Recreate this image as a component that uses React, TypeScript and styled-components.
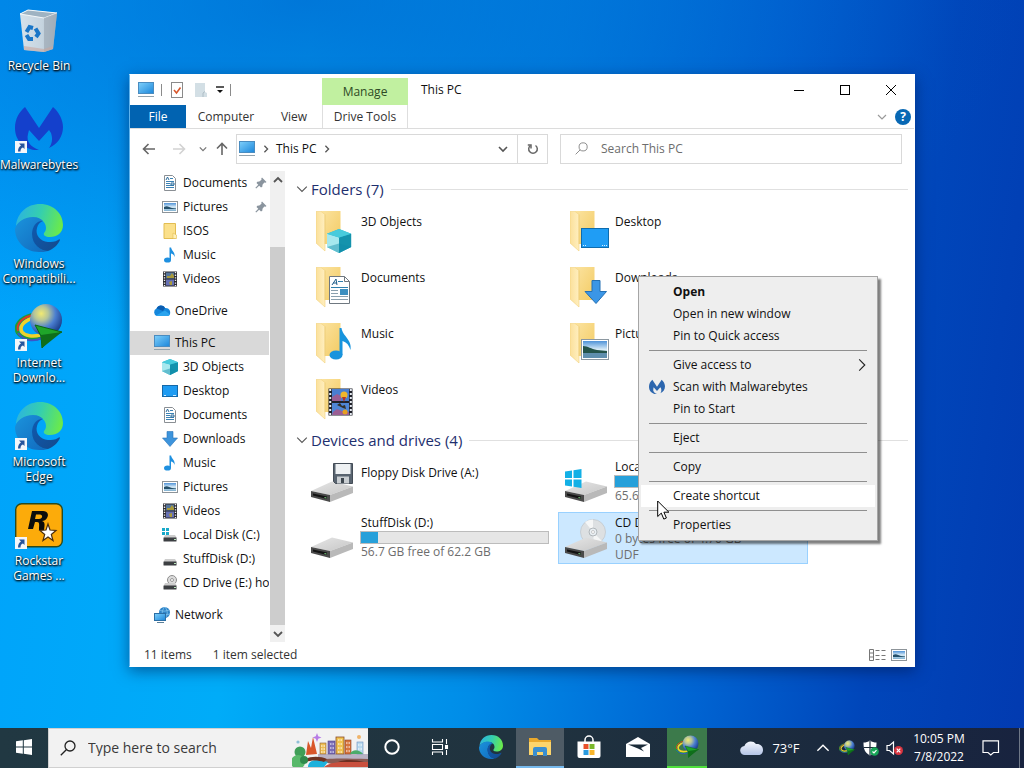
import React from "react";
import styled, { createGlobalStyle, css } from "styled-components";

const FONT = `"Open Sans", "Noto Sans", "Liberation Sans", sans-serif`;

const GlobalStyle = createGlobalStyle`
  *, *::before, *::after { box-sizing: border-box; }
  body { margin: 0; font-family: ${FONT}; font-size: 12px; line-height: 16px; color: #111; }
  button, input { font: inherit; color: inherit; }
  a { color: inherit; text-decoration: none; }
  ul { list-style: none; margin: 0; padding: 0; }
  h2, p { margin: 0; font-weight: 400; }
  svg { display: block; flex: none; }
`;

/* ---------- Shared paint ---------- */

const HiddenDefs = styled.svg`
  position: absolute;
  width: 0;
  height: 0;
`;

const Paints = () => (
  <HiddenDefs aria-hidden="true">
    <defs>
      <linearGradient id="screen" x1="0" y1="0" x2="1" y2="1">
        <stop offset="0" stopColor="#7fd0fb" /><stop offset="1" stopColor="#1b86da" />
      </linearGradient>
      <linearGradient id="folderBack" x1="0" y1="0" x2="1" y2="1">
        <stop offset="0" stopColor="#fbe3a0" /><stop offset="1" stopColor="#f3cb63" />
      </linearGradient>
      <linearGradient id="folderFront" x1="0" y1="0" x2="1" y2="0">
        <stop offset="0" stopColor="#fbe09a" /><stop offset="1" stopColor="#ffefc0" />
      </linearGradient>
      <linearGradient id="edgeTop" x1="0" y1="0.3" x2="1" y2="0.5">
        <stop offset="0" stopColor="#2cb3e0" /><stop offset="0.5" stopColor="#35cfae" /><stop offset="1" stopColor="#6bea4a" />
      </linearGradient>
      <linearGradient id="edgeLeft" x1="0" y1="0" x2="1" y2="1">
        <stop offset="0" stopColor="#1b93dc" /><stop offset="1" stopColor="#1169bd" />
      </linearGradient>
      <linearGradient id="edgeLow" x1="0" y1="0" x2="1" y2="1">
        <stop offset="0" stopColor="#0f5ab0" /><stop offset="1" stopColor="#144a8c" />
      </linearGradient>
      <radialGradient id="globe" cx="0.35" cy="0.3" r="0.75">
        <stop offset="0" stopColor="#f2ea72" /><stop offset="0.3" stopColor="#b4c49a" /><stop offset="0.6" stopColor="#4a7ed0" /><stop offset="1" stopColor="#173a86" />
      </radialGradient>
      <linearGradient id="driveTop" x1="0" y1="0" x2="1" y2="1">
        <stop offset="0" stopColor="#e6e6e6" /><stop offset="1" stopColor="#c6c6c6" />
      </linearGradient>
      <linearGradient id="bin" x1="0" y1="0" x2="1" y2="0">
        <stop offset="0" stopColor="#e2e7eb" /><stop offset="0.6" stopColor="#d2d9df" /><stop offset="1" stopColor="#a9b4bd" />
      </linearGradient>
      <linearGradient id="cloud" x1="0" y1="0" x2="0" y2="1">
        <stop offset="0" stopColor="#f4f7fd" /><stop offset="1" stopColor="#b4c4e6" />
      </linearGradient>
      <linearGradient id="photo" x1="0" y1="0" x2="0" y2="1">
        <stop offset="0" stopColor="#4f93d8" /><stop offset="0.5" stopColor="#d7ebf7" /><stop offset="1" stopColor="#7fb0d0" />
      </linearGradient>
    </defs>
  </HiddenDefs>
);

/* ---------- Drawings ---------- */

type SizeProps = { size?: number };

const MonitorIcon = ({ size = 18 }: SizeProps) => (
  <svg width={size} height={size} viewBox="0 0 18 18">
    <rect x="1.5" y="1.5" width="15" height="11" fill="url(#screen)" stroke="#4a8cc0" />
    <path d="M1 15.5h16" stroke="#93a3ad" />
  </svg>
);

const DesktopGlyph = () => (
  <svg width="16" height="16" viewBox="0 0 16 16">
    <rect x="0.5" y="2.5" width="15" height="11" fill="#1e9bf2" stroke="#1468a8" />
    <path d="M2 12.5h2M11 12.5h3" stroke="#cfeaff" />
  </svg>
);

const DocGlyph = () => (
  <svg width="16" height="16" viewBox="0 0 16 16">
    <path d="M2.5 .5h8l3 3v12h-11z" fill="#fff" stroke="#8a8f94" />
    <path d="M4 6.500h8M4 8.500h4M4 10.500h8M4 12.500h8M8 3.500h3" stroke="#3b82b4" />
    <path d="M4 5l1.500-3L7 5M9 8h3v2H9z" stroke="#2a6c9c" fill="none" />
  </svg>
);

const PictureGlyph = () => (
  <svg width="16" height="16" viewBox="0 0 16 16">
    <rect x="0.5" y="2.5" width="15" height="11" fill="#fff" stroke="#8d9499" />
    <rect x="2" y="4" width="12" height="8" fill="url(#photo)" />
    <path d="M2 8c3-2 5 0 8 1l4 .5V10H2z" fill="#24506b" />
  </svg>
);

const FolderGlyph = () => (
  <svg width="16" height="16" viewBox="0 0 16 16">
    <path d="M2 .5h11.500v15H2z" fill="#fbe08a" stroke="#e2bd52" />
    <path d="M11 15.500V10l3.500 2v3.500z" fill="#fff0b8" stroke="#e2bd52" strokeWidth=".6" />
  </svg>
);

const MusicGlyph = () => (
  <svg width="16" height="16" viewBox="0 0 16 16">
    <ellipse cx="5.500" cy="13" rx="3.500" ry="2.600" fill="#1e90e0" />
    <path d="M7.500 13V.5h1.600C9.500 4 13.500 5 12.500 10 12 7.500 10.500 6.800 9 6.500V13z" fill="#1e90e0" />
  </svg>
);

const VideoGlyph = () => (
  <svg width="16" height="16" viewBox="0 0 16 16">
    <rect x="1" y=".5" width="14" height="15" fill="#2a2a30" />
    <rect x="4" y="1.500" width="8" height="6" fill="#56769c" />
    <rect x="4" y="8.500" width="8" height="6" fill="#6670b4" />
    <path d="M5 5h3l2-3 2 3v2H5zM7 11l3-1v4H8z" fill="#a99a3a" />
    <path d="M2.500 1v14M13.500 1v14" stroke="#f0f0f0" strokeWidth="1.400" strokeDasharray="1.300 1.300" />
  </svg>
);

const CubeShape = () => (
  <>
    <path d="M0 4L9 0l9 4v11l-9 5-9-5z" fill="#29b5cc" />
    <path d="M0 4l9 3v13l-9-5z" fill="#a6e8ee" />
    <path d="M9 7l9-3v11l-9 5z" fill="#1593ad" />
    <path d="M0 4l9-4 9 4-9 3z" fill="#48cbdc" />
    <path d="M9 12l9 3-9 5-9-5z" fill="#0f8ca8" opacity=".45" />
  </>
);

const CubeGlyph = () => (
  <svg width="16" height="16" viewBox="0 0 18 20" preserveAspectRatio="none"><CubeShape /></svg>
);

const DownGlyph = () => (
  <svg width="16" height="16" viewBox="0 0 16 16">
    <path d="M5 .5h6V7h4.500L8 15.500.5 7H5z" fill="#3d94dc" stroke="#2a74b8" strokeWidth=".6" />
  </svg>
);

const CloudGlyph = () => (
  <svg width="18" height="18" viewBox="0 0 18 18">
    <path d="M4 14a4 4 0 0 1-.5-7.500C5 3 10 2.500 12 6c4-.5 6 3 5 6a3 3 0 0 1-2.500 2z" fill="#1487dc" />
    <path d="M3.500 6.500C5 3 10 2.500 12 6l-2 3-5-2z" fill="#0a5cb0" />
    <path d="M3 13.500L12 8.500l5 4A3 3 0 0 1 14.500 14H4z" fill="#2aa4ee" />
  </svg>
);

const MiniDrive = ({ kind }: { kind: "windows" | "plain" | "disc" }) => (
  <svg width="16" height="16" viewBox="0 0 16 16">
    {kind === "disc" && (
      <g><circle cx="10" cy="5" r="4.500" fill="#dcdcdc" stroke="#8e8e8e" /><circle cx="10" cy="5" r="1.500" fill="#fff" stroke="#999" /></g>
    )}
    <path d="M3 8h10l2 3H1.500z" fill="#cdcdcd" />
    <rect x="1.500" y="10.500" width="13" height="4" rx=".5" fill="#3c3f42" />
    <path d="M12 12.500h2" stroke="#b6e3b8" />
    {kind === "windows" && <path d="M0 1h3v3H0zM4 1h3v3H4zM0 5h3v3H0zM4 5h3v3H4z" fill="#18a9c9" />}
  </svg>
);

const NetworkGlyph = () => (
  <svg width="18" height="18" viewBox="0 0 18 18">
    <circle cx="11.500" cy="6.500" r="5.500" fill="#2f84c8" />
    <path d="M7 4c3 2 6 1 9 0M6 8c3 1 8 1 11 0M11.500 1c-3 4-3 8 0 11M12 1c3 4 3 8 0 11" stroke="#8fcdf2" fill="none" strokeWidth=".7" />
    <rect x="1.500" y="7.500" width="11" height="7" fill="url(#screen)" stroke="#2b6ea5" />
    <path d="M4 16.500h7" stroke="#5b7f99" />
  </svg>
);

const PinGlyph = () => (
  <svg width="12" height="12" viewBox="0 0 12 12">
    <path d="M7 .5L11.500 5l-1 .7-1.200-.2L7.500 7.800l-.2 2L6 10.500 1.500 6l.8-1.200 2-.2L6.500 2.800 6.300 1.500z" fill="#8a949e" />
    <path d="M4 8L.8 11.200" stroke="#8a949e" strokeWidth="1.200" />
  </svg>
);

const Chevron = ({ dir = "down", size = 10, color = "#555", weight = 1.2 }: { dir?: "down" | "up" | "right"; size?: number; color?: string; weight?: number }) => (
  <svg width={size} height={size} viewBox="0 0 10 10" fill="none" stroke={color} strokeWidth={weight}>
    <path d={dir === "down" ? "M1 3l4 4 4-4" : dir === "up" ? "M1 7l4-4 4 4" : "M3 1l4 4-4 4"} />
  </svg>
);

const Arrow = ({ dir, color }: { dir: "left" | "right" | "up"; color: string }) => (
  <svg width="14" height="14" viewBox="0 0 14 14" fill="none" stroke={color} strokeWidth="1.600">
    <path d={dir === "left" ? "M13 7H2M6.500 2L1.500 7l5 5" : dir === "right" ? "M1 7h11M7.500 2l5 5-5 5" : "M7 13V2M2 6.500L7 1.500l5 5"} />
  </svg>
);

const FolderShape = () => (
  <>
    <path d="M5 1h19.500v33H9z" fill="url(#folderBack)" />
    <path d="M0 1.500h5l4 3v36.500L0 33z" fill="url(#folderFront)" stroke="#f1d27c" strokeWidth=".6" />
    <path d="M9 4.500V34" stroke="#efcf7c" strokeWidth=".8" />
  </>
);

type FolderKind = "cube" | "desktop" | "doc" | "down" | "music" | "picture" | "video";

const LargeFolder = ({ kind }: { kind: FolderKind }) => (
  <svg width="44" height="44" viewBox="0 0 44 44">
    <FolderShape />
    {kind === "cube" && <g transform="translate(11 19) scale(1.34 1.2)"><CubeShape /></g>}
    {kind === "desktop" && (
      <g><rect x="11.500" y="18.500" width="27" height="19" fill="#1f9df5" stroke="#0e6cae" /><path d="M13 35.500h3M32 35.500h5" stroke="#d8f0ff" strokeDasharray="1 1" /></g>
    )}
    {kind === "doc" && (
      <g>
        <path d="M13.500 10.500h15l5 5v22h-20z" fill="#fff" stroke="#6f7880" />
        <path d="M28.500 10.500v5h5" fill="none" stroke="#6f7880" />
        <path d="M22 15.500h5M15 21.500h17" stroke="#2f80ad" />
        <path d="M16 19l4-6 1 6M17 17h4" stroke="#215f8a" fill="none" />
        <path d="M15 24.500h7M15 27.500h7M15 30.500h17M15 33.500h17" stroke="#8aa0ae" />
        <rect x="24" y="23" width="8" height="6" fill="#3c8fc0" />
      </g>
    )}
    {kind === "down" && <path d="M22 14.500h8v11h6.500L26 37.500 15 25.500h7z" fill="#3b96e6" stroke="#2470b4" />}
    {kind === "music" && (
      <g fill="#1894dd"><ellipse cx="20" cy="33" rx="6.500" ry="4.500" /><path d="M23.500 33V6h2c1 8 11 12 9 22-1.500-5-4-8-8-9v14z" /></g>
    )}
    {kind === "picture" && (
      <g>
        <rect x="11.500" y="17.500" width="27" height="20" fill="#fff" stroke="#8c98a1" />
        <rect x="13" y="19" width="24" height="17" fill="url(#photo)" />
        <path d="M13 24c5 0 8 3 14 4l10 1v2H13z" fill="#24534a" /><path d="M13 31h24v5H13z" fill="#5f8fae" />
      </g>
    )}
    {kind === "video" && (
      <g>
        <rect x="12.500" y="10.500" width="24" height="27" fill="#20222a" />
        <rect x="16" y="11" width="17" height="12" fill="#4a7ed0" /><rect x="16" y="25" width="17" height="12" fill="#4f86d6" />
        <path d="M16 19l5-3 4 2v5h-9zM17 34l4-3 5 2 7 1v3H16z" fill="#9a5f95" />
        <circle cx="28" cy="17" r="3.500" fill="#f0b62c" /><path d="M26 19l2 5 2-5z" fill="#b43324" />
        <path d="M21 27l3-2 2 3 3-1 1 4-3-1z" fill="#33312a" /><circle cx="29" cy="34" r="2.500" fill="#e6a020" />
        <path d="M14.200 11v27M34.800 11v27" stroke="#e8edf4" strokeWidth="2" strokeDasharray="2 2" />
      </g>
    )}
  </svg>
);

type DriveKind = "floppy" | "windows" | "plain" | "disc";

const LargeDrive = ({ kind }: { kind: DriveKind }) => (
  <svg width="44" height="44" viewBox="0 0 44 44">
    {kind === "disc" && (
      <g>
        <circle cx="29" cy="17" r="12.500" fill="#dde0e2" stroke="#bfc4c8" strokeWidth=".7" />
        <path d="M29 17L21 7a13 13 0 0 1 8-2.500zM29 17l9 9a13 13 0 0 1-8 3.500z" fill="#f5f6f6" />
        <circle cx="29" cy="17" r="4" fill="#e9eff3" stroke="#b0b6ba" /><circle cx="29" cy="17" r="1.500" fill="#fff" stroke="#aaa" strokeWidth=".6" />
      </g>
    )}
    <path d="M1 32L22 22.500 43 27.500 20 36z" fill="url(#driveTop)" />
    <path d="M1 32L20 36v7L1 38z" fill="#4a4a4a" />
    <path d="M20 36l23-8.500V34L20 43z" fill="#b9b9b9" />
    <path d="M3 34.500l14 3v2.500l-14-3.500z" fill="#131313" />
    <path d="M14.500 38.500l2 .5" stroke="#7ad17f" />
    {kind === "floppy" && (
      <g>
        <path d="M23.500 4.500h19v20h-17l-2-2z" fill="#596470" stroke="#444d57" />
        <rect x="25.500" y="5" width="15" height="10" fill="#eef1f3" /><rect x="27" y="17.500" width="12" height="7" fill="#c9ced2" /><rect x="31" y="19" width="3" height="5" fill="#3f4850" />
      </g>
    )}
    {kind === "windows" && (
      <path d="M1 12.500l7-1v7.500H1zM9.500 11.300L17.500 10v9h-8zM1 20.500h7v7l-7-1zM9.500 20.500h8v8.500l-8-1.300z" fill="#12b0e6" />
    )}
  </svg>
);

const EdgeIcon = ({ size = 48 }: SizeProps) => (
  <svg width={size} height={size} viewBox="0 0 48 48">
    <path d="M1 22C2 9 12 0 25 0c14 0 23 10 23 21 0 8-6 12-13 12-5 0-7-2-6-4 1-1 2-3 2-5 0-6-5-10-12-10C10 14 4 17 1 22z" fill="url(#edgeTop)" />
    <path d="M0 25C2 18 9 13 18 13c5 0 8 2 10 4-8 0-12 8-10 17 2 8 8 13 15 13-3 1-6 1-9 1C10 48 0 37 0 25z" fill="url(#edgeLeft)" />
    <path d="M28 17c-6-1-11 5-11 13 0 10 8 17 16 17 5-2 10-6 12-11 0-1-1-1-2 0-3 2-7 2-10 2-8-1-13-7-11-14 1-4 3-6 6-7z" fill="url(#edgeLow)" />
  </svg>
);

const MalwareIcon = ({ size = 48, color = "#1440cc" }: SizeProps & { color?: string }) => (
  <svg width={size} height={size} viewBox="0 0 48 48" fill={color}>
    <path d="M10 2l14 21L38 2c6 5 10 13 10 20 0 9-5 17-14 21 3-4 4-9 2-15l-2-3-10 11-10-11-1 4c-2 8 3 13 11 16C10 46 0 36 0 23 0 14 4 7 10 2z" />
  </svg>
);

const IdmIcon = ({ size = 48 }: SizeProps) => (
  <svg width={size} height={size} viewBox="0 0 48 48" fill="none">
    <path d="M17 12C5 15-1 23 3 30c4 6 14 7 24 4" stroke="#1e9a3a" strokeWidth="4" />
    <path d="M18 15C8 18 4 24 7 29c3 4 11 5 18 3" stroke="#f0d22a" strokeWidth="3.500" />
    <path d="M19 12C7 14 1 21 3 28" stroke="#dd3a28" strokeWidth="2" />
    <path d="M3 30c5 8 16 9 24 5" stroke="#3b54c8" strokeWidth="2" />
    <circle cx="31" cy="17" r="16" fill="url(#globe)" />
    <path d="M20 22l27 7-11 5-9 11-1-12z" fill="#1fa52a" stroke="#0c6416" />
    <path d="M26 32l21-3-20 16z" fill="#0f6e1a" />
  </svg>
);

const BinIcon = () => (
  <svg width="48" height="48" viewBox="0 0 48 48">
    <path d="M5 8l8-4 29 3-4 36-9 3-20-2z" fill="url(#bin)" opacity=".94" />
    <path d="M5 8l24 4 13-5-29-3z" fill="#9fb3c2" stroke="#f4f8fa" />
    <path d="M29 12l13-5-4 36-9 3z" fill="#9fabb6" opacity=".7" />
    <path d="M9 40l20 3 9-3v3l-9 3-20-2z" fill="#c8a79f" opacity=".6" />
    <g fill="none" stroke="#1976c8" strokeWidth="4">
      <path d="M11.500 26l3-5 3.500 1M20.500 22.500l3 5-2.500 3.500M18 33h-4l-2.500-4" />
    </g>
  </svg>
);

const RockstarIcon = () => (
  <svg width="48" height="48" viewBox="0 0 48 48">
    <rect x=".7" y="2.700" width="46.600" height="43" rx="6" fill="#fcab0a" stroke="#2c4a1c" strokeWidth="1.400" />
    <path d="M17 10h11c5 0 6 4 4 7-1 2-3 3-5 3 3 1 3 3 2 9h-5c0-5 1-8-2-8h-2l-2 7h-5zM21 13.500L20 18h4c4 0 4-4.500 1-4.500z" fill="#0c0c0c" fillRule="evenodd" />
    <path d="M33 23l2 6 6 .5-4.700 4 1.700 6L33 36l-5 3.500 1.700-6L25 29.500l6-.5z" fill="#fff" stroke="#4a2d10" strokeWidth="1.200" />
  </svg>
);

const ShortcutArrow = () => (
  <svg width="12" height="12" viewBox="0 0 12 12">
    <rect width="12" height="12" fill="#f4f6fa" />
    <path d="M4 2.500h5.500V8L8 6.500C6 7 5.500 8.500 5.500 10.500H3C3 7.500 4 5.500 6 4.500z" fill="#27549c" />
  </svg>
);

const WindowsLogo = () => (
  <svg width="16" height="16" viewBox="0 0 16 16" fill="#fff">
    <path d="M0 2.300L6.800 1.300v6.200H0zM7.800 1.200L16 0v7.500H7.800zM0 8.500h6.800v6.200L0 13.700zM7.800 8.500H16V16l-8.200-1.200z" />
  </svg>
);

const SearchGlyph = ({ size, color, weight }: { size: number; color: string; weight: number }) => (
  <svg width={size} height={size} viewBox="0 0 16 16" fill="none" stroke={color} strokeWidth={weight}>
    <circle cx="10" cy="6" r="5" /><path d="M6.300 9.700L.8 15.200" />
  </svg>
);

const CityDrawing = () => (
  <svg width="76" height="38" viewBox="0 0 76 38">
    <rect x="26" y="25" width="50" height="7" fill="#b9b2c4" />
    <path d="M14 26l2-14 3 7 2-11 4 17z" fill="#d9562a" />
    <rect x="28" y="14" width="6" height="11" fill="#eebf52" stroke="#8c5d32" strokeWidth=".6" />
    <rect x="36" y="12" width="7" height="13" fill="#7a6cb6" stroke="#4d4181" strokeWidth=".6" />
    <rect x="44" y="8" width="8" height="17" fill="#f0c24f" stroke="#8a4e2a" strokeWidth=".8" />
    <rect x="53" y="11" width="6" height="14" fill="#d8743c" stroke="#8a3f22" strokeWidth=".6" />
    <rect x="65" y="13" width="6" height="12" fill="#b8d9ee" stroke="#6b8fc0" strokeWidth=".6" />
    <path d="M29 17h4M29 20h4M29 23h4M38 15h4M38 19h4M38 23h4M46 11h5M46 15h5M46 19h5M46 23h5M54 14h4M54 18h4M54 22h4M66 16h4M66 20h4" stroke="#fff" strokeDasharray="1.500 1" />
    <path d="M58 25c2-5 9-5 13 0z" fill="#4aab6a" />
    <path d="M26 32c6-3 20-3 50-2v5H40z" fill="#8a5a52" />
    <path d="M16 38c0-7 8-9 20-5l-4 5z" fill="#1db1dc" />
    <path d="M32 38c8-7 26-5 44-5v5z" fill="#c9503e" />
    <path d="M46 33c8-3 18-2 26 0z" fill="#6e2f22" />
    <path d="M14 30c4-3 15-3 21 0l-3 3c-6-2-13-2-18 0z" fill="#6e3322" />
    <circle cx="8" cy="23" r="5.500" fill="#3f9e57" /><circle cx="6" cy="33" r="7" fill="#58b86a" /><circle cx="12" cy="31" r="4" fill="#2f8a4c" />
    <path d="M25 4l1.200 3.300L29.500 8.500l-3.300 1.200L25 13l-1.200-3.300L20.500 8.500l3.300-1.200z" fill="#b77be6" />
    <circle cx="6" cy="13" r="1.600" fill="#8fc0d8" /><circle cx="67" cy="8" r="2" fill="#f0b46a" />
  </svg>
);

const TaskViewGlyph = () => (
  <svg width="18" height="18" viewBox="0 0 18 18" fill="none" stroke="#fff" strokeWidth="1.100">
    <path d="M1.500 1v3h10V1M1.500 17v-3h10v3M1.500 6.500h10v5h-10zM15.500 1v5M15.500 12v5" />
    <rect x="14.500" y="7.500" width="2" height="3" fill="#fff" />
  </svg>
);

const ExplorerIcon = () => (
  <svg width="24" height="20" viewBox="0 0 24 20">
    <path d="M1 1h8l2 2h12v15H1z" fill="#e9a92c" /><path d="M1 5h22v13H1z" fill="#fcd56c" />
    <path d="M5 19v-7a2 2 0 0 1 2-2h10a2 2 0 0 1 2 2v7h-4v-4H9v4z" fill="#3a8fd0" />
  </svg>
);

const StoreIcon = () => (
  <svg width="24" height="24" viewBox="0 0 24 24">
    <path d="M8 7V5a4 4 0 0 1 8 0v2" fill="none" stroke="#fff" strokeWidth="1.500" />
    <path d="M.5 6.500h23V21a2 2 0 0 1-2 2h-19a2 2 0 0 1-2-2z" fill="#fff" />
    <path d="M6.500 9h5v5h-5z" fill="#e8502a" /><path d="M12.500 9h5v5h-5z" fill="#7ab82c" /><path d="M6.500 15h5v5h-5z" fill="#2a9be0" /><path d="M12.500 15h5v5h-5z" fill="#f7b52c" />
  </svg>
);

const MailIcon = () => (
  <svg width="24" height="20" viewBox="0 0 24 20">
    <path d="M0 7L12 0l12 7v13H0z" fill="#fff" /><path d="M2 7.500h20l-7 3.500 3 3.500-6-3z" fill="#1b2b38" />
  </svg>
);

const WeatherIcon = () => (
  <svg width="24" height="16" viewBox="0 0 24 16">
    <path d="M5 15a4.500 4.500 0 0 1-.6-9C6 1 13 0 16 4c4-.5 7 2 7 6 0 3-2 5-4.500 5z" fill="url(#cloud)" />
  </svg>
);

const ShieldIcon = () => (
  <svg width="16" height="16" viewBox="0 0 16 16">
    <path d="M7 .5c2 1.500 4 2 6.500 2 0 6-1 10-6.500 13C1.500 12.500.5 8.500.5 2.500 3 2.500 5 2 7 .5z" fill="#fff" />
    <path d="M7 1v14M1 7.500h12" stroke="#1c2b38" strokeWidth="1.200" />
    <circle cx="11.500" cy="11.500" r="4.300" fill="#18a558" /><path d="M9.500 11.500l1.500 1.500 2.500-2.800" stroke="#fff" fill="none" strokeWidth="1.200" />
  </svg>
);

const SpeakerIcon = () => (
  <svg width="18" height="16" viewBox="0 0 18 16">
    <path d="M1 5.500h2.500L7.500 2v12L3.500 10.500H1z" fill="none" stroke="#fff" strokeWidth="1.200" />
    <circle cx="12.500" cy="10.500" r="4.500" fill="#d8343f" /><path d="M10.700 8.700l3.600 3.600M14.300 8.700l-3.600 3.600" stroke="#fff" strokeWidth="1.200" />
  </svg>
);

const NoticeIcon = () => (
  <svg width="18" height="16" viewBox="0 0 18 16" fill="none" stroke="#fff" strokeWidth="1.200">
    <path d="M1 .8h15.500v11.700h-5L8.800 15 6 12.500H1z" />
  </svg>
);

const PointerDrawing = styled.svg`
  position: absolute;
  left: 657px;
  top: 500px;
  pointer-events: none;
`;

/* ---------- Desktop ---------- */

const Screen = styled.div`
  position: relative;
  display: flex;
  flex-direction: column;
  min-height: 100vh;
  background:
    radial-gradient(ellipse 70% 45% at 30% 0%, rgba(0, 84, 196, 0.6), rgba(0, 84, 196, 0) 100%),
    linear-gradient(98deg, #00a2fb 0%, #00acf8 28%, #008de8 50%, #0064d2 70%, #0046ba 85%, #023ab0 100%);
`;

const DesktopArea = styled.main`
  flex: 1;
  display: flex;
`;

const ShortcutList = styled.ul`
  width: 78px;
`;

const ShortcutLink = styled.a`
  display: flex;
  flex-direction: column;
  align-items: center;
  gap: 4px;
  height: 99px;
  padding-top: 6px;
  color: #fff;
  line-height: 15px;
  text-align: center;
  white-space: pre-line;
  text-shadow: 0 1px 2px #000, 1px 1px 2px rgba(0, 0, 0, 0.9);
`;

const ShortcutPicture = styled.span`
  position: relative;
  width: 48px;
  height: 48px;
`;

const ShortcutBadge = styled.span`
  position: absolute;
  left: 0;
  bottom: 0;
`;

const shortcuts = [
  { label: "Recycle Bin", icon: <BinIcon />, linked: false },
  { label: "Malwarebytes", icon: <MalwareIcon />, linked: true },
  { label: "Windows\nCompatibili...", icon: <EdgeIcon />, linked: false },
  { label: "Internet\nDownlo...", icon: <IdmIcon />, linked: true },
  { label: "Microsoft\nEdge", icon: <EdgeIcon />, linked: true },
  { label: "Rockstar\nGames ...", icon: <RockstarIcon />, linked: true },
];

/* ---------- Explorer frame ---------- */

const Explorer = styled.section`
  flex: 1;
  min-width: 0;
  display: flex;
  flex-direction: column;
  margin: 74px 109px 61px 51px;
  border: 1px solid #fff;
  border-left-color: #5fb4ee;
  background: #fff;
  box-shadow: 0 4px 14px rgba(0, 20, 70, 0.5);
`;

const bareButton = css`
  display: flex;
  align-items: center;
  justify-content: center;
  border: 0;
  padding: 0;
  background: none;
`;

const TitleBar = styled.header`
  display: flex;
  height: 30px;
`;

const QuickTools = styled.div`
  display: flex;
  align-items: center;
  gap: 6px;
  width: 192px;
  padding-left: 7px;
`;

const ToolButton = styled.button<{ $width?: number }>`
  ${bareButton}
  width: ${(p) => p.$width ?? 18}px;
  height: 18px;
`;

const ToolDivider = styled.span`
  width: 1px;
  height: 12px;
  background: #8b8b8b;
`;

const ContextTab = styled.button`
  ${bareButton}
  width: 86px;
  height: 27px;
  margin-top: 3px;
  background: #c1f0a0;
  color: #2e4a25;
`;

const WindowTitle = styled.h2`
  flex: 1;
  padding: 7px 13px;
  font-size: 12px;
`;

const CaptionButton = styled.button`
  ${bareButton}
  width: 46px;
`;

const RibbonTabs = styled.nav`
  display: flex;
  align-items: stretch;
  height: 24px;
  border-bottom: 1px solid #dcdcdc;
`;

const RibbonTab = styled.button<{ $width: number; $tone?: "file" | "tools" }>`
  ${bareButton}
  width: ${(p) => p.$width}px;
  color: #333;
  ${(p) => p.$tone === "file" && css`background: #0163b1; color: #fff;`}
  ${(p) => p.$tone === "tools" && css`border: solid #dedede; border-width: 0 1px;`}
`;

const RibbonEnd = styled.div`
  display: flex;
  align-items: center;
  gap: 8px;
  margin-left: auto;
  padding-right: 3px;
`;

const HelpButton = styled.button`
  ${bareButton}
  width: 16px;
  height: 16px;
  border-radius: 50%;
  background: #0868b4;
  color: #fff;
  font-weight: 700;
`;

const NavBar = styled.div`
  display: flex;
  align-items: center;
  height: 42px;
  padding: 0 12px 3px 9px;
`;

const NavButton = styled.button<{ $width: number }>`
  ${bareButton}
  flex: none;
  width: ${(p) => p.$width}px;
  height: 28px;
`;

const AddressBox = styled.div`
  flex: 1 1 312px;
  min-width: 0;
  display: flex;
  align-items: center;
  gap: 6px;
  height: 30px;
  margin-right: 12px;
  padding-left: 1px;
  border: 1px solid #d9d9d9;
`;

const AddressEnd = styled.div`
  display: flex;
  margin-left: auto;
`;

const RefreshButton = styled(NavButton)`
  border-left: 1px solid #d9d9d9;
`;

const SearchField = styled.label`
  flex: 1 1 342px;
  min-width: 0;
  display: flex;
  align-items: center;
  gap: 13px;
  height: 30px;
  padding-left: 14px;
  border: 1px solid #d9d9d9;
`;

const SearchInput = styled.input`
  flex: 1;
  min-width: 0;
  border: 0;
  padding: 0;
  outline: 0;
  background: transparent;
  &::placeholder { color: #6d6d6d; opacity: 1; }
`;

const Body = styled.div`
  flex: 1;
  display: flex;
  min-height: 0;
`;

/* ---------- Navigation tree ---------- */

const Tree = styled.nav`
  width: 139px;
  overflow: hidden;
`;

const TreeGroup = styled.ul`
  margin-bottom: 8px;
`;

const TreeLink = styled.a<{ $root?: boolean; $active?: boolean }>`
  display: flex;
  align-items: center;
  gap: ${(p) => (p.$root ? 4 : 5)}px;
  height: 24px;
  padding-left: ${(p) => (p.$root ? 23 : 32)}px;
  padding-right: 2px;
  white-space: nowrap;
  background: ${(p) => (p.$active ? "#d9d9d9" : "transparent")};
`;

const TreeLabel = styled.span`
  flex: 1;
`;

type TreeEntry = { label: string; icon: React.ReactNode; root?: boolean; active?: boolean; pinned?: boolean };

const treeGroups: TreeEntry[][] = [
  [
    { label: "Documents", icon: <DocGlyph />, pinned: true },
    { label: "Pictures", icon: <PictureGlyph />, pinned: true },
    { label: "ISOS", icon: <FolderGlyph /> },
    { label: "Music", icon: <MusicGlyph /> },
    { label: "Videos", icon: <VideoGlyph /> },
  ],
  [{ label: "OneDrive", icon: <CloudGlyph />, root: true }],
  [
    { label: "This PC", icon: <MonitorIcon />, root: true, active: true },
    { label: "3D Objects", icon: <CubeGlyph /> },
    { label: "Desktop", icon: <DesktopGlyph /> },
    { label: "Documents", icon: <DocGlyph /> },
    { label: "Downloads", icon: <DownGlyph /> },
    { label: "Music", icon: <MusicGlyph /> },
    { label: "Pictures", icon: <PictureGlyph /> },
    { label: "Videos", icon: <VideoGlyph /> },
    { label: "Local Disk (C:)", icon: <MiniDrive kind="windows" /> },
    { label: "StuffDisk (D:)", icon: <MiniDrive kind="plain" /> },
    { label: "CD Drive (E:) hor", icon: <MiniDrive kind="disc" /> },
  ],
  [{ label: "Network", icon: <NetworkGlyph />, root: true }],
];

const ScrollTrack = styled.div`
  display: flex;
  flex-direction: column;
  width: 16px;
  border-left: 1px solid #fff;
  background: #f0f0f0;
`;

const ScrollButton = styled.button`
  ${bareButton}
  height: 17px;
`;

const ScrollSpace = styled.div`
  flex: 59 1 0;
`;

const ScrollThumb = styled.div`
  flex: 379 1 0;
  background: #cdcdcd;
`;

/* ---------- File list ---------- */

const Content = styled.div`
  flex: 1;
  min-width: 0;
  padding: 8px 6px 0 11px;
`;

const GroupHeading = styled.h2`
  display: flex;
  align-items: center;
  gap: 3px;
  height: 20px;
  font-size: 15px;
  line-height: 20px;
  color: #1e2f6e;
  &::after {
    content: "";
    flex: 1;
    height: 1px;
    margin-left: 4px;
    background: #e0e0e0;
  }
`;

const TileGrid = styled.ul`
  display: grid;
  grid-template-columns: repeat(auto-fill, 250px);
  column-gap: 4px;
  row-gap: 4px;
  padding: 6px 0 5px 8px;
`;

const Tile = styled.a<{ $selected?: boolean; $folder?: boolean }>`
  display: flex;
  gap: ${(p) => (p.$folder ? 1 : 7)}px;
  height: 52px;
  padding-left: ${(p) => (p.$folder ? 11 : 5)}px;
  padding-top: ${(p) => (p.$folder ? 4 : 2)}px;
  border: 1px solid ${(p) => (p.$selected ? "#99d1ff" : "transparent")};
  background: ${(p) => (p.$selected ? "#cce8ff" : "transparent")};
`;

const TileText = styled.div<{ $top?: number }>`
  flex: 1;
  padding-top: ${(p) => p.$top ?? 0}px;
  white-space: nowrap;
`;

const Faint = styled.p`
  color: #6d6d6d;
`;

const UsageBar = styled.div`
  width: 189px;
  height: 13px;
  margin-left: -1px;
  border: 1px solid #bcbcbc;
  background: #e6e6e6;
`;

const UsageFill = styled.div`
  height: 100%;
  background: #26a0da;
`;

const folders: { label: string; kind: FolderKind }[] = [
  { label: "3D Objects", kind: "cube" },
  { label: "Desktop", kind: "desktop" },
  { label: "Documents", kind: "doc" },
  { label: "Downloads", kind: "down" },
  { label: "Music", kind: "music" },
  { label: "Pictures", kind: "picture" },
  { label: "Videos", kind: "video" },
];

const StatusBar = styled.footer`
  display: flex;
  align-items: center;
  gap: 21px;
  height: 24px;
  padding: 1px 7px 0 14px;
  color: #333;
`;

const ViewButtons = styled.div`
  display: flex;
  gap: 5px;
  margin-left: auto;
`;

/* ---------- Context menu ---------- */

const Menu = styled.div`
  position: absolute;
  left: 638px;
  top: 276px;
  width: 240px;
  padding: 4px 2px;
  border: 1px solid #a5a5a5;
  background: #eee;
  box-shadow: 3px 3px 2px rgba(0, 0, 0, 0.5);
`;

const MenuItem = styled.button<{ $bold?: boolean; $hot?: boolean }>`
  display: grid;
  grid-template-columns: 24px 1fr 12px;
  align-items: center;
  width: 100%;
  height: 22px;
  padding: 0 8px;
  border: 0;
  text-align: left;
  font-weight: ${(p) => (p.$bold ? 700 : 400)};
  background: ${(p) => (p.$hot ? "#fff" : "transparent")};
`;

const MenuLine = styled.hr`
  height: 1px;
  margin: 3px 8px;
  border: 0;
  background: #8f8f8f;
`;

type MenuEntry = { label: string; bold?: boolean; hot?: boolean; arrow?: boolean; icon?: React.ReactNode };

const menuSections: MenuEntry[][] = [
  [{ label: "Open", bold: true }, { label: "Open in new window" }, { label: "Pin to Quick access" }],
  [{ label: "Give access to", arrow: true }, { label: "Scan with Malwarebytes", icon: <MalwareIcon size={16} color="#2c66ae" /> }, { label: "Pin to Start" }],
  [{ label: "Eject" }],
  [{ label: "Copy" }],
  [{ label: "Create shortcut", hot: true }],
  [{ label: "Properties" }],
];

/* ---------- Taskbar ---------- */

const Taskbar = styled.footer`
  display: flex;
  height: 40px;
  color: #fff;
  background: linear-gradient(90deg, #213842 0%, #20333f 50%, #1b2a3e 80%, #18233f 100%);
`;

const TaskButton = styled.button<{ $width?: number; $state?: "open" | "busy" }>`
  ${bareButton}
  width: ${(p) => p.$width ?? 48}px;
  border-bottom: 2px solid transparent;
  ${(p) => p.$state === "open" && css`background: #4e5b65; border-color: #76b9ed;`}
  ${(p) => p.$state === "busy" && css`margin-left: 4px; background: #3c7a4b; border-color: #4fe03c;`}
`;

const TaskSearch = styled.label`
  flex: 0 1 320px;
  display: flex;
  align-items: center;
  padding-left: 11px;
  border: 1px solid #d0d0d0;
  border-right: 0;
  background: #f2f2f2;
  color: #333;
  font-size: 14px;
`;

const TaskSearchInput = styled(SearchInput)`
  margin-left: 12px;
  &::placeholder { color: #3a3a3a; }
`;

const PinnedApps = styled.div`
  display: flex;
  gap: 1px;
  margin-left: 3px;
`;

const Tray = styled.div`
  display: flex;
  align-items: center;
  margin-left: auto;
`;

const TrayButton = styled.button<{ $width: number }>`
  ${bareButton}
  gap: 8px;
  width: ${(p) => p.$width}px;
  height: 40px;
`;

const Temperature = styled.span`
  font-size: 13px;
`;

const Clock = styled(TrayButton)`
  flex-direction: column;
  gap: 2px;
`;

const PeekButton = styled.button`
  width: 5px;
  height: 40px;
  margin-left: 8px;
  padding: 0;
  border: 0;
  border-left: 1px solid #6f7887;
  background: none;
`;

export default function App() {
  return (
    <Screen>
      <GlobalStyle />
      <Paints />
      <DesktopArea>
        <ShortcutList>
          {shortcuts.map((s) => (
            <li key={s.label}>
              <ShortcutLink href="#">
                <ShortcutPicture>
                  {s.icon}
                  {s.linked && <ShortcutBadge><ShortcutArrow /></ShortcutBadge>}
                </ShortcutPicture>
                {s.label}
              </ShortcutLink>
            </li>
          ))}
        </ShortcutList>

        <Explorer aria-label="This PC">
          <TitleBar>
            <QuickTools>
              <MonitorIcon />
              <ToolDivider />
              <ToolButton aria-label="Properties">
                <svg width="14" height="16" viewBox="0 0 14 16">
                  <rect x="1.500" y=".5" width="11" height="15" fill="#fff" stroke="#8a8a8a" />
                  <path d="M4 8l2.500 3L10.500 5.500" fill="none" stroke="#d8572c" strokeWidth="1.600" />
                </svg>
              </ToolButton>
              <ToolButton aria-label="New folder">
                <svg width="14" height="16" viewBox="0 0 14 16"><path d="M1 1h10v9l2 1v4H1z" fill="#d3dfe5" /><path d="M9 15v-4l2-1.500" fill="none" stroke="#aebdc6" /></svg>
              </ToolButton>
              <ToolButton $width={8} aria-label="Customize toolbar">
                <svg width="8" height="8" viewBox="0 0 8 8"><path d="M0 1h8" stroke="#222" strokeWidth="1.500" /><path d="M1 4h6L4 7z" fill="#111" /></svg>
              </ToolButton>
              <ToolDivider />
            </QuickTools>
            <ContextTab>Manage</ContextTab>
            <WindowTitle>This PC</WindowTitle>
            <CaptionButton aria-label="Minimize"><svg width="10" height="10"><path d="M0 5.500h10" stroke="#000" /></svg></CaptionButton>
            <CaptionButton aria-label="Maximize"><svg width="10" height="10"><rect x=".5" y=".5" width="9" height="9" fill="none" stroke="#000" /></svg></CaptionButton>
            <CaptionButton aria-label="Close"><svg width="10" height="10"><path d="M0 0l10 10M10 0L0 10" stroke="#000" /></svg></CaptionButton>
          </TitleBar>

          <RibbonTabs>
            <RibbonTab $width={56} $tone="file">File</RibbonTab>
            <RibbonTab $width={80}>Computer</RibbonTab>
            <RibbonTab $width={56}>View</RibbonTab>
            <RibbonTab $width={86} $tone="tools">Drive Tools</RibbonTab>
            <RibbonEnd>
              <Chevron color="#9a9a9a" />
              <HelpButton aria-label="Help">?</HelpButton>
            </RibbonEnd>
          </RibbonTabs>

          <NavBar>
            <NavButton $width={20} aria-label="Back"><Arrow dir="left" color="#666" /></NavButton>
            <NavButton $width={40} aria-label="Forward"><Arrow dir="right" color="#d2d2d2" /></NavButton>
            <NavButton $width={8} aria-label="Recent locations"><Chevron size={8} weight={1.6} color="#777" /></NavButton>
            <NavButton $width={29} aria-label="Up"><Arrow dir="up" color="#666" /></NavButton>
            <AddressBox>
              <MonitorIcon />
              <Chevron dir="right" size={8} weight={1.6} />
              <a href="#">This PC</a>
              <Chevron dir="right" size={8} weight={1.6} />
              <AddressEnd>
                <NavButton $width={28} aria-label="Address history"><Chevron weight={1.6} /></NavButton>
                <RefreshButton $width={30} aria-label="Refresh">
                  <svg width="12" height="12" viewBox="0 0 12 12" fill="none" stroke="#666" strokeWidth="1.500"><path d="M3.500 2.500A4.300 4.300 0 1 0 8.500 2.500" /><path d="M4 5.500V2H.8" /></svg>
                </RefreshButton>
              </AddressEnd>
            </AddressBox>
            <SearchField>
              <SearchGlyph size={13} color="#8a8a8a" weight={1.2} />
              <SearchInput placeholder="Search This PC" aria-label="Search This PC" />
            </SearchField>
          </NavBar>

          <Body>
            <Tree aria-label="Navigation pane">
              {treeGroups.map((group, g) => (
                <TreeGroup key={g}>
                  {group.map((e) => (
                    <li key={e.label}>
                      <TreeLink href="#" $root={e.root} $active={e.active}>
                        {e.icon}
                        <TreeLabel>{e.label}</TreeLabel>
                        {e.pinned && <PinGlyph />}
                      </TreeLink>
                    </li>
                  ))}
                </TreeGroup>
              ))}
            </Tree>
            <ScrollTrack>
              <ScrollButton aria-label="Scroll up"><Chevron dir="up" weight={1.8} /></ScrollButton>
              <ScrollSpace />
              <ScrollThumb />
              <ScrollButton aria-label="Scroll down"><Chevron weight={1.8} /></ScrollButton>
            </ScrollTrack>
            <Content>
              <GroupHeading><Chevron size={12} weight={0.9} />Folders (7)</GroupHeading>
              <TileGrid>
                {folders.map((f) => (
                  <li key={f.label}>
                    <Tile href="#" $folder>
                      <LargeFolder kind={f.kind} />
                      <TileText $top={4}>{f.label}</TileText>
                    </Tile>
                  </li>
                ))}
              </TileGrid>
              <GroupHeading><Chevron size={12} weight={0.9} />Devices and drives (4)</GroupHeading>
              <TileGrid>
                <li>
                  <Tile href="#">
                    <LargeDrive kind="floppy" />
                    <TileText $top={6}>Floppy Disk Drive (A:)</TileText>
                  </Tile>
                </li>
                <li>
                  <Tile href="#">
                    <LargeDrive kind="windows" />
                    <TileText>
                      Local Disk (C:)
                      <UsageBar><UsageFill style={{ width: "45%" }} /></UsageBar>
                      <Faint>65.6 GB free of 119 GB</Faint>
                    </TileText>
                  </Tile>
                </li>
                <li>
                  <Tile href="#">
                    <LargeDrive kind="plain" />
                    <TileText>
                      StuffDisk (D:)
                      <UsageBar><UsageFill style={{ width: "9%" }} /></UsageBar>
                      <Faint>56.7 GB free of 62.2 GB</Faint>
                    </TileText>
                  </Tile>
                </li>
                <li>
                  <Tile href="#" $selected>
                    <LargeDrive kind="disc" />
                    <TileText>
                      CD Drive (E:)
                      <Faint>0 bytes free of 4.70 GB</Faint>
                      <Faint>UDF</Faint>
                    </TileText>
                  </Tile>
                </li>
              </TileGrid>
            </Content>
          </Body>

          <StatusBar>
            <span>11 items</span>
            <span>1 item selected</span>
            <ViewButtons>
              <ToolButton aria-label="Details view">
                <svg width="17" height="14" viewBox="0 0 17 14" fill="none" stroke="#777"><path d="M.5 1.500h4v11h-4zM.5 5h4M.5 9h4M6.500 2.500h4M12.500 2.500h4M6.500 7.500h4M12.500 7.500h4M6.500 11.500h4M12.500 11.500h4" /></svg>
              </ToolButton>
              <ToolButton $width={16} aria-label="Large icons view"><PictureGlyph /></ToolButton>
            </ViewButtons>
          </StatusBar>
        </Explorer>
      </DesktopArea>

      <Taskbar>
        <TaskButton aria-label="Start"><WindowsLogo /></TaskButton>
        <TaskSearch>
          <SearchGlyph size={16} color="#222" weight={1.3} />
          <TaskSearchInput placeholder="Type here to search" aria-label="Type here to search" />
          <CityDrawing />
        </TaskSearch>
        <TaskButton aria-label="Cortana"><svg width="16" height="16"><circle cx="8" cy="8" r="6.700" fill="none" stroke="#fff" strokeWidth="2" /></svg></TaskButton>
        <TaskButton aria-label="Task view"><TaskViewGlyph /></TaskButton>
        <PinnedApps>
          <TaskButton aria-label="Microsoft Edge"><EdgeIcon size={24} /></TaskButton>
          <TaskButton $state="open" aria-label="File Explorer"><ExplorerIcon /></TaskButton>
          <TaskButton aria-label="Microsoft Store"><StoreIcon /></TaskButton>
          <TaskButton aria-label="Mail"><MailIcon /></TaskButton>
          <TaskButton $width={40} $state="busy" aria-label="Internet Download Manager"><IdmIcon size={24} /></TaskButton>
        </PinnedApps>
        <Tray>
          <TrayButton $width={82}><WeatherIcon /><Temperature>73°F</Temperature></TrayButton>
          <TrayButton $width={24} aria-label="Show hidden icons"><Chevron dir="up" size={14} color="#fff" weight={1} /></TrayButton>
          <TrayButton $width={24} aria-label="Internet Download Manager"><IdmIcon size={16} /></TrayButton>
          <TrayButton $width={24} aria-label="Windows Security"><ShieldIcon /></TrayButton>
          <TrayButton $width={24} aria-label="Volume"><SpeakerIcon /></TrayButton>
          <Clock $width={64}><span>10:05 PM</span><span>7/8/2022</span></Clock>
          <TrayButton $width={40} aria-label="Notifications"><NoticeIcon /></TrayButton>
          <PeekButton aria-label="Show desktop" />
        </Tray>
      </Taskbar>

      <Menu role="menu">
        {menuSections.map((section, i) => (
          <React.Fragment key={i}>
            {i > 0 && <MenuLine />}
            {section.map((m) => (
              <MenuItem key={m.label} role="menuitem" $bold={m.bold} $hot={m.hot}>
                <span>{m.icon}</span>
                <span>{m.label}</span>
                {m.arrow && <Chevron dir="right" size={14} color="#222" weight={0.8} />}
              </MenuItem>
            ))}
          </React.Fragment>
        ))}
      </Menu>

      <PointerDrawing width="13" height="20" viewBox="0 0 13 20">
        <path d="M.7 1v15.500l3.600-3.400 2.500 6 2.600-1.100-2.500-5.800h5z" fill="#fff" stroke="#000" />
      </PointerDrawing>
    </Screen>
  );
}
